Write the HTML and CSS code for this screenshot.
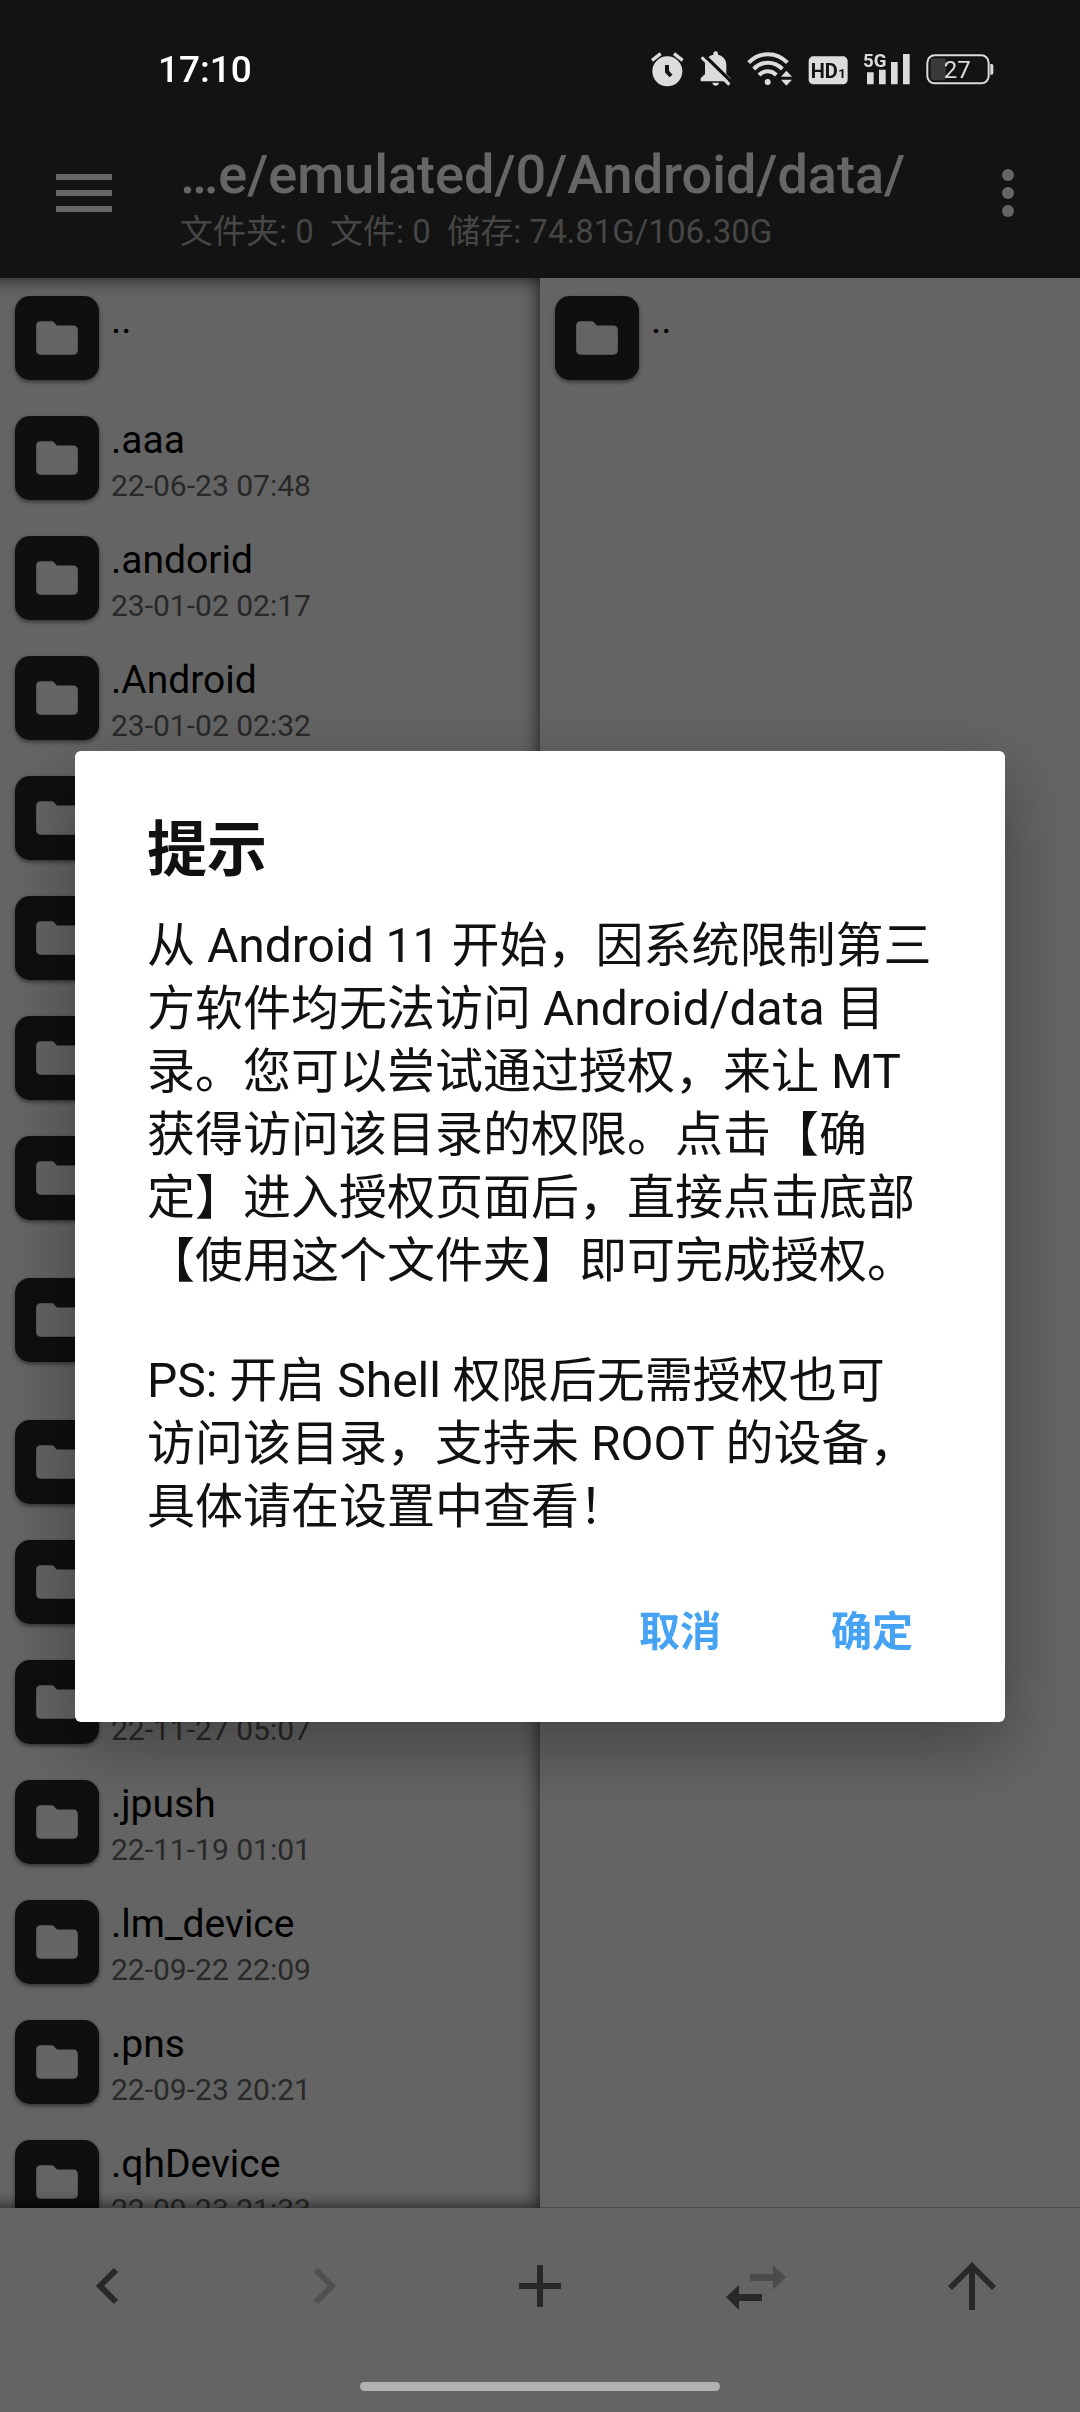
FILE: index.html
```html
<!DOCTYPE html>
<html lang="zh-CN">
<head>
    <meta charset="UTF-8">
    <meta name="viewport" content="width=device-width, initial-scale=1.0">
    <title>MT</title>
    <link rel="stylesheet" href="styles.css">
</head>
<body>
    <svg class="defs" aria-hidden="true">
        <symbol id="folder" viewBox="0 0 24 24">
            <path d="M10 4H4c-1.1 0-2 .9-2 2v12c0 1.1.9 2 2 2h16c1.1 0 2-.9 2-2V8c0-1.1-.9-2-2-2h-8l-2-2z"/>
        </symbol>
    </svg>

    <div class="app">
        <header class="toolbar">
            <button class="menu-button" aria-label="菜单">
                <svg width="56" height="38" viewBox="0 0 56 38"><path d="M0 0h56v6H0zM0 16h56v6H0zM0 32h56v6H0z"/></svg>
            </button>
            <div class="toolbar-text">
                <h1 class="path">…e/emulated/0/Android/data/</h1>
                <p class="stats">文件夹: 0&nbsp; 文件: 0&nbsp; 储存: 74.81G/106.30G</p>
            </div>
            <button class="more-button" aria-label="更多">
                <svg width="12" height="48" viewBox="0 0 12 48"><circle cx="6" cy="6" r="6"/><circle cx="6" cy="24" r="6"/><circle cx="6" cy="42" r="6"/></svg>
            </button>
        </header>

        <main class="panes">
            <ul class="pane active">
                <li><a class="row" href="#"><span class="icon"><svg><use href="#folder"/></svg></span><span class="info"><span class="name">..</span></span></a></li>
                <li><a class="row" href="#"><span class="icon"><svg><use href="#folder"/></svg></span><span class="info"><span class="name">.aaa</span><span class="date">22-06-23 07:48</span></span></a></li>
                <li><a class="row" href="#"><span class="icon"><svg><use href="#folder"/></svg></span><span class="info"><span class="name">.andorid</span><span class="date">23-01-02 02:17</span></span></a></li>
                <li><a class="row" href="#"><span class="icon"><svg><use href="#folder"/></svg></span><span class="info"><span class="name">.Android</span><span class="date">23-01-02 02:32</span></span></a></li>
                <li><a class="row" href="#"><span class="icon"><svg><use href="#folder"/></svg></span></a></li>
                <li><a class="row" href="#"><span class="icon"><svg><use href="#folder"/></svg></span></a></li>
                <li><a class="row" href="#"><span class="icon"><svg><use href="#folder"/></svg></span></a></li>
                <li><a class="row tall" href="#"><span class="icon"><svg><use href="#folder"/></svg></span></a></li>
                <li><a class="row tall" href="#"><span class="icon"><svg><use href="#folder"/></svg></span></a></li>
                <li><a class="row" href="#"><span class="icon"><svg><use href="#folder"/></svg></span></a></li>
                <li><a class="row" href="#"><span class="icon"><svg><use href="#folder"/></svg></span></a></li>
                <li><a class="row" href="#"><span class="icon"><svg><use href="#folder"/></svg></span><span class="info"><span class="name"></span><span class="date">22-11-27 05:07</span></span></a></li>
                <li><a class="row" href="#"><span class="icon"><svg><use href="#folder"/></svg></span><span class="info"><span class="name">.jpush</span><span class="date">22-11-19 01:01</span></span></a></li>
                <li><a class="row" href="#"><span class="icon"><svg><use href="#folder"/></svg></span><span class="info"><span class="name">.lm_device</span><span class="date">22-09-22 22:09</span></span></a></li>
                <li><a class="row" href="#"><span class="icon"><svg><use href="#folder"/></svg></span><span class="info"><span class="name">.pns</span><span class="date">22-09-23 20:21</span></span></a></li>
                <li><a class="row" href="#"><span class="icon"><svg><use href="#folder"/></svg></span><span class="info"><span class="name">.qhDevice</span><span class="date">22-09-23 21:33</span></span></a></li>
            </ul>
            <ul class="pane">
                <li><a class="row" href="#"><span class="icon"><svg><use href="#folder"/></svg></span><span class="info"><span class="name">..</span></span></a></li>
            </ul>
        </main>

        <nav class="bottom-bar">
            <button aria-label="后退"><svg viewBox="0 0 60 60"><path class="line" d="M38 14L22 30l16 16"/></svg></button>
            <button class="disabled" aria-label="前进"><svg viewBox="0 0 60 60"><path class="line" d="M22 14l16 16-16 16"/></svg></button>
            <button aria-label="新建"><svg viewBox="0 0 60 60"><path d="M27 9h6v18h18v6H33v18h-6V33H9v-6h18z"/></svg></button>
            <button aria-label="同步"><svg viewBox="0 0 60 60"><path class="faded" d="M24 18h23V9l13 12-13 13v-9H24z"/><path d="M36 38H13v-9L0 41l13 13v-9h23z"/></svg></button>
            <button aria-label="上级目录"><svg viewBox="0 0 60 60"><path d="M30 6l24 24-4 4-17-17v37h-6V17L10 34l-4-4z"/></svg></button>
        </nav>
    </div>

    <div class="scrim">
        <section class="dialog" role="dialog" aria-labelledby="dialog-title">
            <h2 id="dialog-title" class="dialog-title">提示</h2>
            <p class="message">从 Android 11 开始，因系统限制第三方软件均无法访问 Android/data 目录。您可以尝试通过授权，来让 MT 获得访问该目录的权限。点击【确定】进入授权页面后，直接点击底部【使用这个文件夹】即可完成授权。</p>
            <p class="message">PS: 开启 Shell 权限后无需授权也可<br>访问该目录，支持未 ROOT 的设备，具体请在设置中查看！</p>
            <div class="actions">
                <button>取消</button>
                <button>确定</button>
            </div>
        </section>
    </div>

    <!-- System bars stay bright above the scrim -->
    <div class="status-bar">
        <span class="clock">17:10</span>
        <div class="status-icons">
            <svg width="34" height="36" viewBox="92 62 102 108">
                <circle cx="141" cy="123" r="45"/>
                <path class="stroke" d="M95 90l26-20M161 70l26 20" stroke-width="10"/>
                <path class="cut" d="M140 104v20l12 13" stroke-width="12"/>
            </svg>
            <svg width="32" height="36" viewBox="238 62 96 108">
                <path d="M240 153v-9l13-13v-28c0-14 10-27 25-30v-3a7 7 0 0 1 14 0v3c15 3 25 16 25 30v28l13 13v9zM275 157h20c-1 12-19 12-20 0z"/>
                <path class="cut" d="M250 74l84 82" stroke-width="10"/>
                <path class="stroke" d="M243 81l83 82" stroke-width="9"/>
            </svg>
            <svg width="46" height="36" viewBox="380 62 138 108">
                <path class="stroke" d="M385 97c32-34 84-34 116 0M400 116c24-25 62-25 86 0M416 134c15-15 37-15 52 0" stroke-width="12"/>
                <circle cx="442" cy="155" r="9"/>
                <path class="back" d="M477 140l21-24 26 24v34h-47z"/>
                <path d="M482 139l16-18 17 18zM482 148h33l-17 18z"/>
            </svg>
            <svg width="40" height="36" viewBox="558 62 120 108">
                <rect x="560" y="78" width="117" height="84" rx="14"/>
                <text class="dark" x="566" y="142" font-size="60" font-weight="700">HD</text>
                <text class="dark" x="649" y="142" font-size="40" font-weight="700">1</text>
            </svg>
            <svg width="48" height="36" viewBox="733 62 144 108">
                <path d="M745 126h20v36h-20zM781 118h20v44h-20zM817 95h20v67h-20zM853 71h20v91h-20z"/>
                <text x="733" y="110" font-size="56" font-weight="700">5G</text>
            </svg>
            <svg width="68" height="36" viewBox="920 62 204 108">
                <rect class="level" x="934" y="84" width="46" height="66" rx="10"/>
                <rect class="stroke" x="924" y="75" width="184" height="84" rx="22" stroke-width="6"/>
                <path d="M1113 101h4q5 0 5 5v22q0 5-5 5h-4z"/>
                <text x="1014" y="143" font-size="72" font-weight="400" text-anchor="middle">27</text>
            </svg>
        </div>
    </div>
    <div class="gesture-bar"></div>
</body>
</html>
```
FILE: styles.css
```css
* {
    margin: 0;
    padding: 0;
    box-sizing: border-box;
}

body {
    font-family: Roboto, "Noto Sans CJK SC", sans-serif;
    background-color: #fafafa;
    color: #000;
}

button {
    border: none;
    background: none;
    font: inherit;
    color: inherit;
    cursor: pointer;
}

ul {
    list-style: none;
}

.defs {
    position: absolute;
    width: 0;
    height: 0;
}

.app {
    display: flex;
    flex-direction: column;
    height: 100vh;
    padding-bottom: 48px;
}

/* Toolbar */
.toolbar {
    display: flex;
    align-items: stretch;
    padding-top: 108px;
    background-color: #303030;
    color: #fff;
    fill: #fff;
}

.menu-button,
.more-button {
    display: flex;
    justify-content: center;
    align-items: center;
    width: 168px;
}

.more-button {
    width: 144px;
}

.toolbar-text {
    flex: 1;
    min-width: 0;
    padding: 35px 0 26px 12px;
    white-space: nowrap;
}

.path {
    font-size: 54px;
    line-height: 63px;
    font-weight: 500;
}

.stats {
    margin-top: 6px;
    font-size: 33px;
    line-height: 40px;
    color: #afafaf;
}

/* File panes */
.panes {
    flex: 1;
    min-height: 0;
    display: grid;
    grid-template-columns: 1fr 1fr;
}

.pane {
    position: relative;
    overflow: hidden;
    border-bottom: 1px solid #bbb;
}

.pane.active {
    border-bottom: none;
}

/* Shadow on the top, right and bottom edges only */
.pane.active::after {
    content: "";
    position: absolute;
    inset: 0 0 0 -30px;
    box-shadow: inset 0 0 18px rgba(0, 0, 0, 0.8);
    pointer-events: none;
}

.row {
    display: flex;
    align-items: flex-start;
    gap: 12px;
    min-height: 120px;
    padding: 18px 15px 12px;
    color: #000;
    text-decoration: none;
}

.row.tall {
    min-height: 142px;
}

.icon {
    display: flex;
    justify-content: center;
    align-items: center;
    width: 84px;
    height: 84px;
    border-radius: 15px;
    background-color: #262626;
    box-shadow: 0 2px 4px rgba(0, 0, 0, 0.5);
}

.icon svg {
    width: 50px;
    height: 50px;
    fill: #fafafa;
}

.info {
    display: flex;
    flex-direction: column;
    gap: 5px;
    padding-top: 1px;
}

.name {
    min-height: 46px;
    font-size: 39px;
    line-height: 46px;
}

.date {
    font-size: 30px;
    line-height: 36px;
    color: #666;
}

/* Bottom bar */
.bottom-bar {
    display: grid;
    grid-template-columns: repeat(5, 1fr);
    height: 156px;
    fill: #646464;
}

.bottom-bar button {
    display: flex;
    justify-content: center;
    align-items: center;
}

.bottom-bar svg {
    width: 60px;
    height: 60px;
}

.bottom-bar .line {
    fill: none;
    stroke: #646464;
    stroke-width: 6;
}

.bottom-bar .disabled .line {
    stroke: #c8c8c8;
}

.bottom-bar .faded {
    fill: #bcbcbc;
}

/* Dialog */
.scrim {
    position: fixed;
    inset: 0;
    display: flex;
    justify-content: center;
    align-items: center;
    padding: 108px 75px 48px;
    background-color: rgba(0, 0, 0, 0.6);
}

.dialog {
    width: 100%;
    padding: 56px 72px 36px;
    border-radius: 6px;
    background-color: #fff;
    color: #111;
    box-shadow: 0 24px 72px rgba(0, 0, 0, 0.35);
}

.dialog-title {
    margin-bottom: 19px;
    font-size: 60px;
    line-height: 88px;
    font-weight: 700;
}

.message {
    font-size: 48px;
    line-height: 63px;
}

.message + .message {
    margin-top: 57px;
}

.actions {
    display: flex;
    justify-content: flex-end;
    gap: 70px;
    margin-top: 40px;
}

.actions button {
    padding: 24px 20px;
    font-size: 41px;
    line-height: 60px;
    font-weight: 700;
    color: #46a2f3;
}

/* System bars */
.status-bar {
    position: fixed;
    inset: 0 0 auto;
    display: flex;
    justify-content: space-between;
    align-items: center;
    height: 138px;
    padding: 0 86px 0 158px;
    color: #fff;
}

.clock {
    font-size: 37px;
    font-weight: 500;
}

.status-icons {
    display: flex;
    gap: 15px;
    fill: #dcdcdc;
}

.status-icons .stroke {
    fill: none;
    stroke: #dcdcdc;
}

.status-icons .cut {
    fill: none;
    stroke: #131313;
}

.status-icons .back,
.status-icons .dark {
    fill: #131313;
}

.status-icons .level {
    fill: #3a3a3a;
}

.gesture-bar {
    position: fixed;
    left: 50%;
    bottom: 21px;
    width: 360px;
    height: 9px;
    border-radius: 5px;
    background-color: #b2b2b2;
    transform: translateX(-50%);
}
```
